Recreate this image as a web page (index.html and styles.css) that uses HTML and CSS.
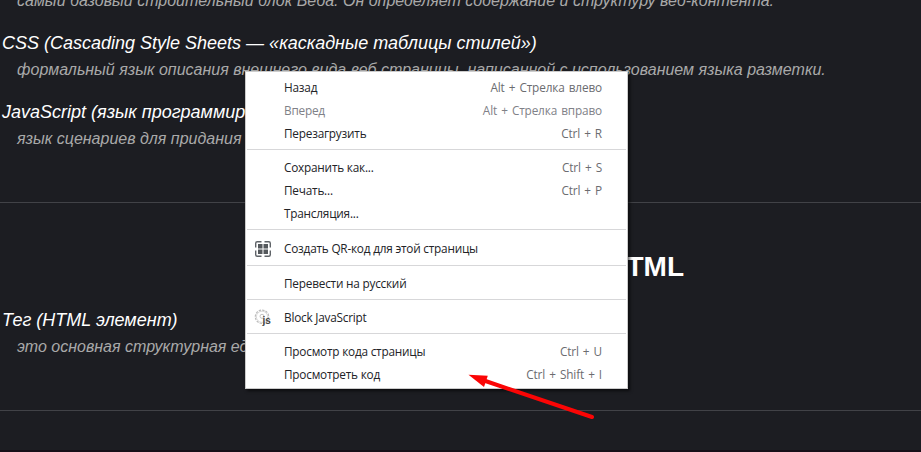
FILE: index.html
```
<!DOCTYPE html>
<html lang="ru">
<head>
<meta charset="utf-8">
<title>HTML</title>
<link rel="stylesheet" href="styles.css">
</head>
<body>
<main class="page">
  <dl class="terms terms-intro">
    <dd>самый базовый строительный блок Веба. Он определяет содержание и структуру веб-контента.</dd>
    <dt>CSS (Cascading Style Sheets — «каскадные таблицы стилей»)</dt>
    <dd>формальный язык описания внешнего вида веб страницы, написанной с использованием языка разметки.</dd>
    <dt>JavaScript (язык программир</dt>
    <dd>язык сценариев для придания</dd>
  </dl>
  <hr class="rule">
  <h1 class="title">HTML</h1>
  <dl class="terms terms-tag">
    <dt>Тег (HTML элемент)</dt>
    <dd>это основная структурная ед</dd>
  </dl>
  <hr class="rule">
</main>
<div class="edge"></div>

<nav class="menu">
  <div class="item"><span class="label">Назад</span><span class="key">Alt + Стрелка влево</span></div>
  <div class="item disabled"><span class="label">Вперед</span><span class="key">Alt + Стрелка вправо</span></div>
  <div class="item"><span class="label">Перезагрузить</span><span class="key">Ctrl + R</span></div>
  <div class="sep"></div>
  <div class="item"><span class="label">Сохранить как...</span><span class="key">Ctrl + S</span></div>
  <div class="item"><span class="label">Печать...</span><span class="key">Ctrl + P</span></div>
  <div class="item"><span class="label">Трансляция...</span></div>
  <div class="sep"></div>
  <div class="item tall">
    <svg class="icon" width="18" height="18" viewBox="0 0 18 18" fill="none" stroke="#5f6368" stroke-width="1.4">
      <path d="M1.7 7.5V3.2a1.5 1.5 0 0 1 1.5-1.5h4.3M10.5 1.7h4.3a1.5 1.5 0 0 1 1.5 1.5v4.3M16.3 10.5v4.3a1.5 1.5 0 0 1-1.5 1.5h-4.3M7.5 16.3H3.2a1.5 1.5 0 0 1-1.5-1.5v-4.3"/>
      <path fill="#54585c" stroke="none" d="M4 4h4.5v4.5H4zM9.5 4H14v4.5H9.5zM4 9.5h4.5V14H4zM9.5 9.5H14V14H9.5z"/>
    </svg>
    <span class="label">Создать QR-код для этой страницы</span>
  </div>
  <div class="sep"></div>
  <div class="item"><span class="label">Перевести на русский</span></div>
  <div class="sep"></div>
  <div class="item">
    <svg class="icon" width="18" height="18" viewBox="0 0 18 18">
      <circle cx="8" cy="7.8" r="6.7" fill="none" stroke="#bcbcbc" stroke-width="1.2" stroke-dasharray="2.4 1.1"/>
      <circle cx="8" cy="7.8" r="5.6" fill="none" stroke="#d0d0d0" stroke-width=".8"/>
      <circle cx="8" cy="7.3" r="2" fill="none" stroke="#c4c4c4"/>
      <text class="js" x="8.6" y="15">js</text>
    </svg>
    <span class="label">Block JavaScript</span>
  </div>
  <div class="sep"></div>
  <div class="item"><span class="label">Просмотр кода страницы</span><span class="key">Ctrl + U</span></div>
  <div class="item"><span class="label">Просмотреть код</span><span class="key">Ctrl + Shift + I</span></div>
</nav>

<svg class="arrow" width="130" height="50" viewBox="0 0 130 50">
  <path d="M16 9.5L124 46" stroke="#fb0505" stroke-width="4" stroke-linecap="round"/>
  <path d="M.5 3.8L19.8 4.8L16 16Z" fill="#fb0505"/>
</svg>
</body>
</html>
```
FILE: styles.css
```
* { box-sizing: border-box; }

body {
  margin: 0;
  height: 452px;
  overflow: hidden;
  display: flex;
  flex-direction: column;
  background: #1c1d22;
  color: #fff;
  font-family: "Liberation Sans", Arial, sans-serif;
}

.page { flex: 1; }

.terms { margin: 0; font-style: italic; white-space: nowrap; }
.terms-intro { margin-top: -11px; height: 213px; }
.terms-tag { height: 104px; }

dt { padding-left: 2px; font-size: 18px; line-height: 29px; }
dd { margin: 0 0 16px 17px; font-size: 16px; line-height: 24px; color: #a9a9a9; }

.rule { margin: 0; border: 0; height: 1px; background: #414247; }

.title {
  margin: 0;
  width: 684px;
  height: 103px;
  padding-top: 47px;
  text-align: right;
  font-size: 28px;
  line-height: 34px;
}

.edge { height: 2px; background: #170f18; }

.menu {
  position: absolute;
  left: 245px;
  top: 71px;
  width: 383px;
  height: 318px;
  padding: 4px 0 2px;
  background: #fff;
  border: 1px solid #ccc;
  box-shadow: 2px 2px 3px rgba(0, 0, 0, .6);
  color: #222327;
  font: 12px/23px "Open Sans", "Noto Sans", sans-serif;
}

.item {
  display: flex;
  align-items: center;
  height: 23px;
  padding: 0 25px 0 8px;
}

.tall { height: 25px; }
.icon { width: 18px; height: 18px; margin-right: -18px; }
.label { margin-left: 30px; white-space: nowrap; font-size: 11.8px; letter-spacing: -.22px; }
.key { margin-left: auto; color: #6b6c70; white-space: nowrap; font-size: 11.8px; letter-spacing: -.15px; word-spacing: 1.2px; }
.disabled, .disabled .key { color: #808187; }
.sep { height: 1px; margin: 4px 1px 6px; background: #d7d7d9; }
.js { font: bold 10px "Liberation Sans", sans-serif; fill: #444; }

.arrow { position: absolute; left: 468px; top: 371px; }
```
